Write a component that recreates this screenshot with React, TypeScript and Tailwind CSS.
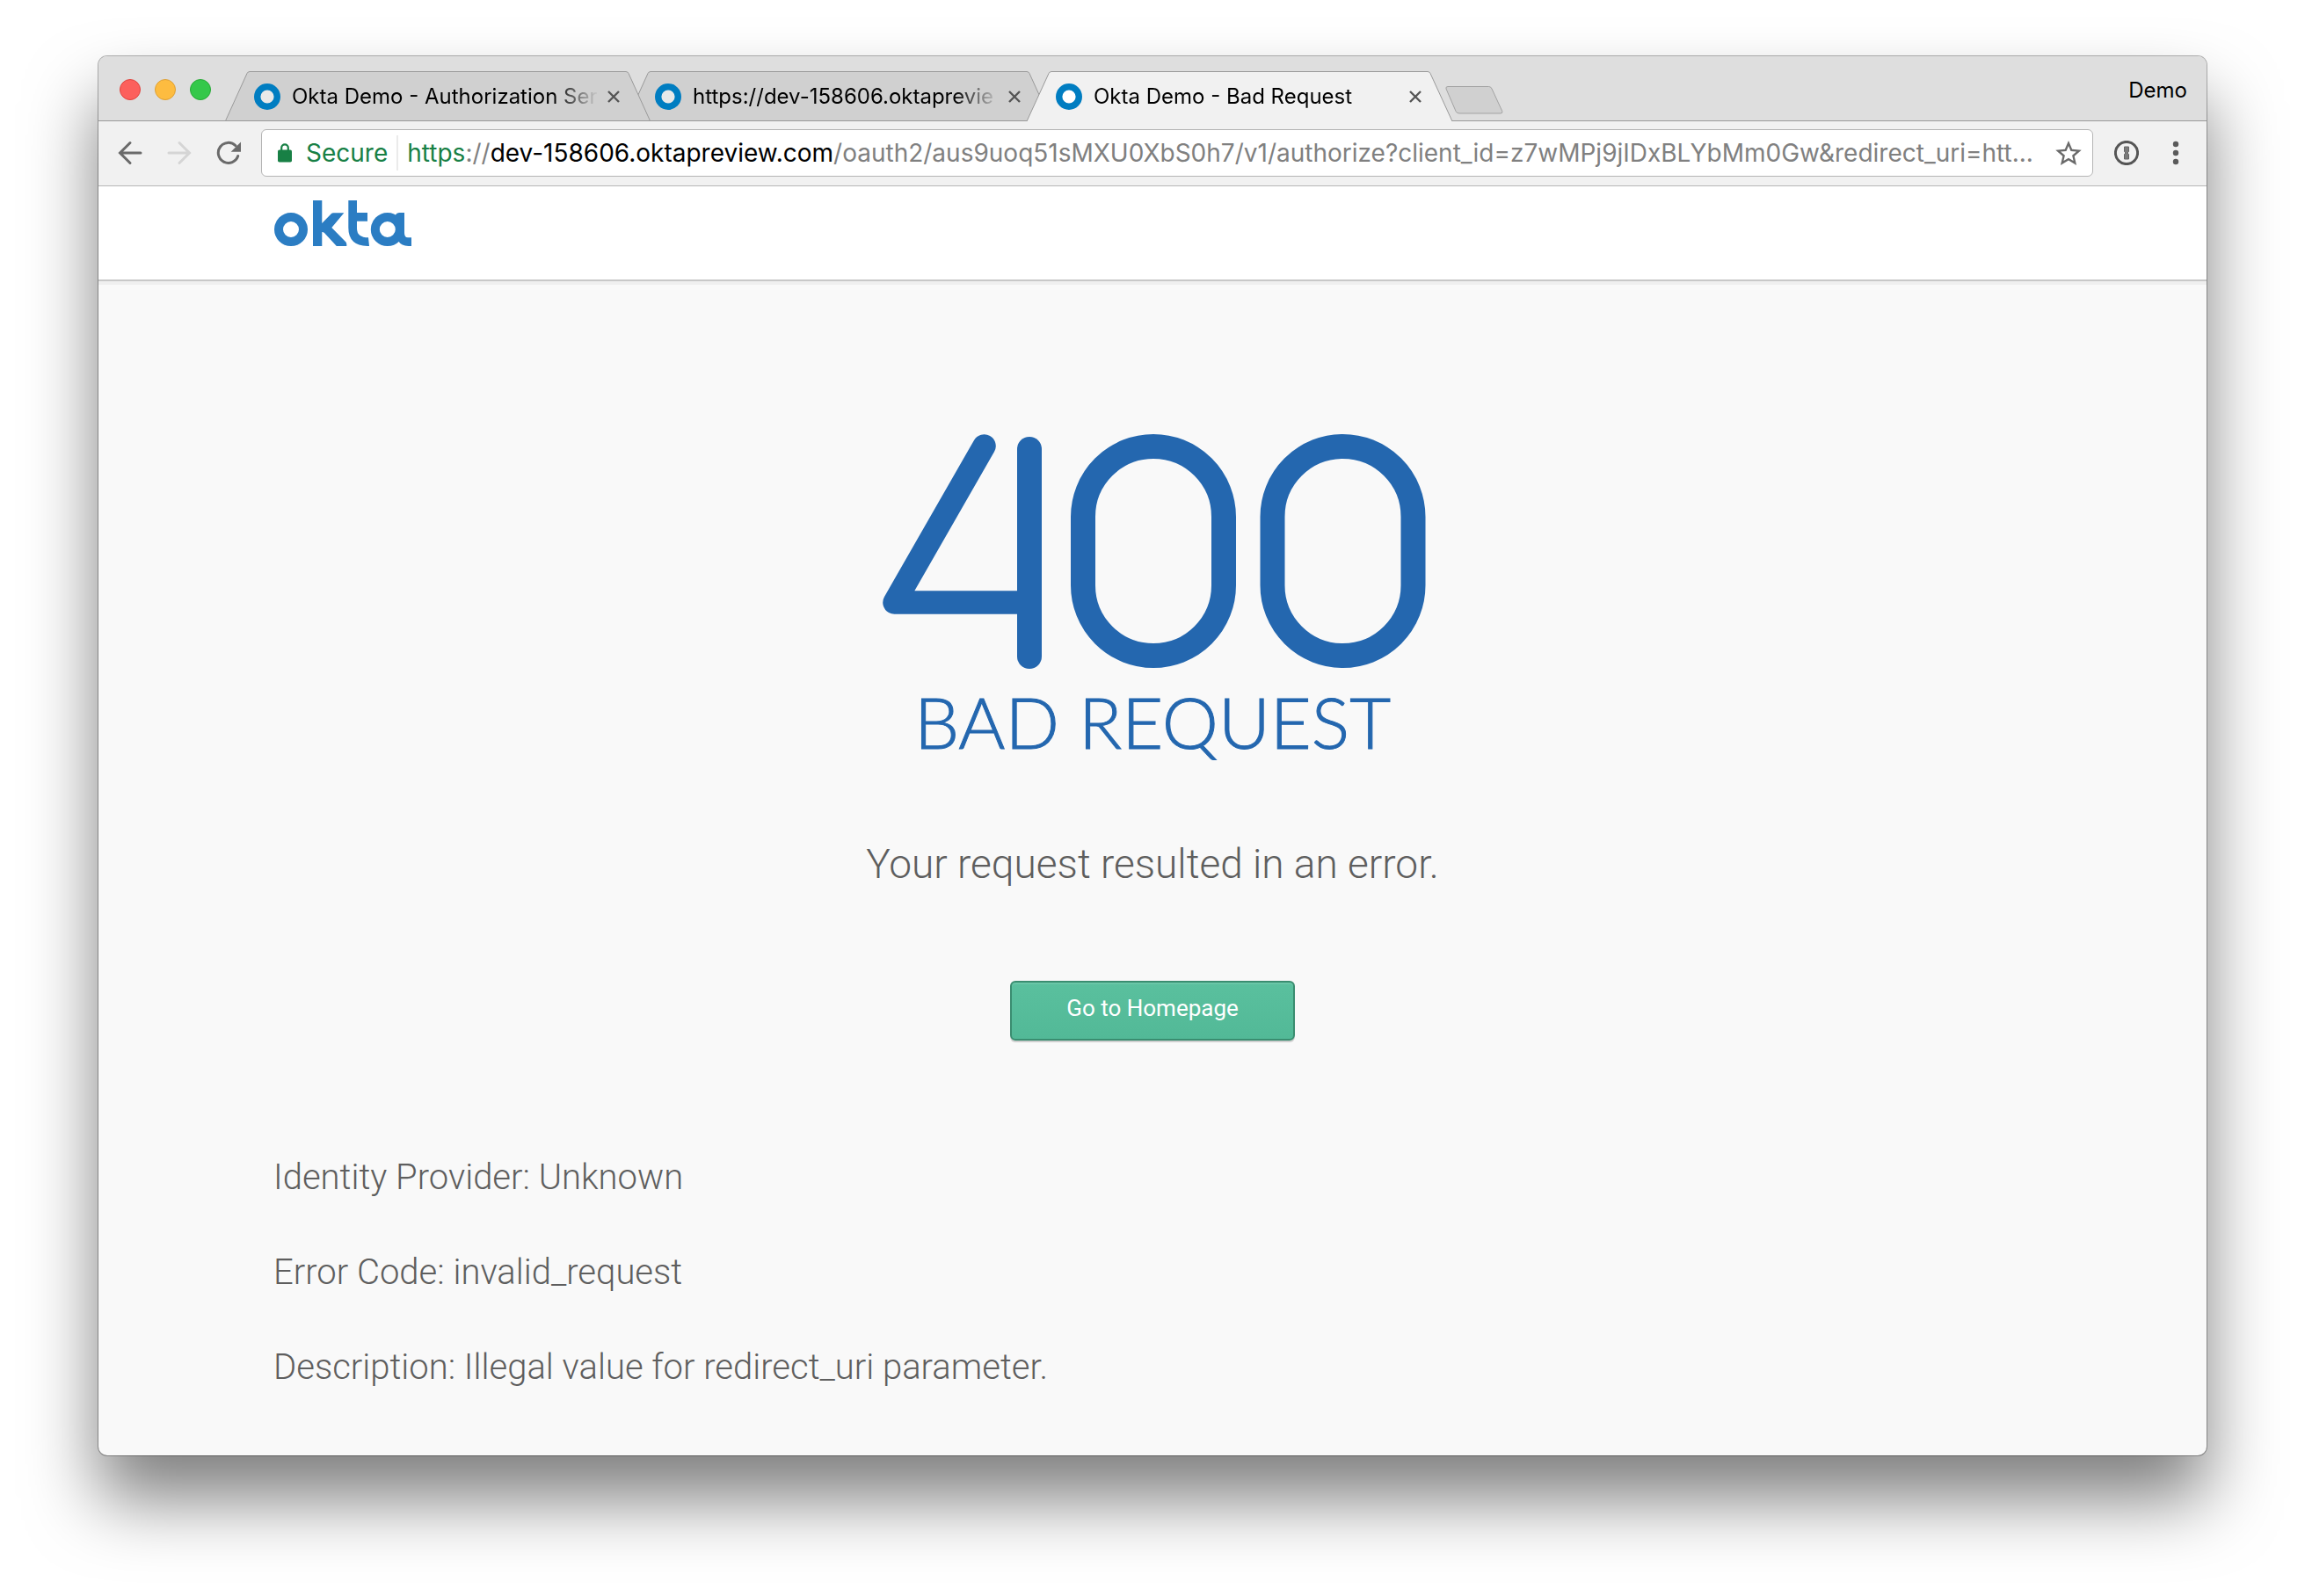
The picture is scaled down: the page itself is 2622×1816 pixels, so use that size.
import type { ReactNode } from "react";

type TabData = { title: string; active?: boolean; layer: string };

const tabs: TabData[] = [
  { title: "Okta Demo - Authorization Ser", layer: "z-20" },
  { title: "https://dev-158606.oktaprevie", layer: "z-10" },
  { title: "Okta Demo - Bad Request", active: true, layer: "z-30" },
];

const details = [
  "Identity Provider: Unknown",
  "Error Code: invalid_request",
  "Description: Illegal value for redirect_uri parameter.",
];

function Tab({ title, active, layer }: TabData) {
  return (
    <div className={`relative flex h-[57px] w-[484px] items-center pr-[35px] pl-[33px] ${layer}`}>
      <svg className="absolute inset-0 h-full w-full" viewBox="0 0 484 57" preserveAspectRatio="none" aria-hidden="true">
        {active ? (
          <path d="M0 57L25 2.5Q26 .5 28 .5H456Q458 .5 459 2.5L484 57" fill="#f1f1f1" stroke="#999" />
        ) : (
          <path d="M.5 56.5L25 2.5Q26 .5 28 .5H456Q458 .5 459 2.5L483.5 56.5Z" fill="#d0d0d0" stroke="#999" />
        )}
      </svg>
      <svg className="relative size-[30px] shrink-0" viewBox="0 0 30 30" aria-hidden="true">
        <circle cx="15" cy="15" r="11.3" fill={active ? "#fff" : "#e9e9e9"} stroke="#007dc1" strokeWidth="7.4" />
      </svg>
      <button
        type="button"
        role="tab"
        aria-selected={!!active}
        className="relative ml-[13px] min-w-0 flex-1 text-left text-2xl whitespace-nowrap text-black [mask-image:linear-gradient(to_right,black_calc(100%-58px),transparent_calc(100%-6px))]"
      >
        {title}
      </button>
      <button type="button" aria-label="Close tab" className="relative ml-1 shrink-0">
        <svg className="size-[14px]" viewBox="0 0 14 14" aria-hidden="true">
          <path d="M1 1L13 13M13 1L1 13" stroke="#555" strokeWidth="2.4" />
        </svg>
      </button>
    </div>
  );
}

function ToolButton({ label, children }: { label: string; children: ReactNode }) {
  return (
    <button type="button" aria-label={label} className="shrink-0">
      <svg className="size-7" viewBox="0 0 28 28" fill="none" aria-hidden="true">
        {children}
      </svg>
    </button>
  );
}

function OktaLogo() {
  return (
    <svg className="h-[52px] w-[156px]" viewBox="0 0 156 52" fill="#2b7dc3" role="img" aria-label="okta">
      <circle cx="19" cy="33" r="14" fill="none" stroke="#2b7dc3" strokeWidth="10" />
      <path d="M44 0H54.3V26L64.5 15.6Q65.6 14.3 67.5 14.3H79.3L65.3 31L81.5 47.5Q82.6 49 82.3 52H70.8L57 37Q56 36 54.3 36V52H44Z" />
      <path d="M84.3 0H94V14H106V23.7H94V32Q94 42.3 107 42.3L108 52Q84.3 52.5 84.3 31Z" />
      <circle cx="128.8" cy="33" r="14" fill="none" stroke="#2b7dc3" strokeWidth="10" />
      <path d="M138 16.5Q139 14 142 14H148V37Q148 42.3 152 42.3H156V52Q145 52.5 141.7 47L138.2 33Z" />
    </svg>
  );
}

export default function App() {
  return (
    <div className="flex min-h-screen flex-col bg-white px-28 pt-16 pb-40 font-['Inter',sans-serif]">
      <div className="flex flex-1 flex-col overflow-hidden rounded-[10px] bg-[#f9f9f9] shadow-[0_0_0_1px_rgba(0,0,0,0.3),0_50px_80px_rgba(0,0,0,0.5)]">
        <div className="flex h-[74px] items-end bg-[#dedede] pr-[22px] pl-6 shadow-[inset_0_-1px_0_#999]">
          <div className="mr-4 flex h-full items-center gap-4 pt-0.5">
            <button type="button" aria-label="Close window" className="size-6 rounded-full border border-[#e0443e] bg-[#fc605c]" />
            <button type="button" aria-label="Minimize window" className="size-6 rounded-full border border-[#dea034] bg-[#fdbc40]" />
            <button type="button" aria-label="Zoom window" className="size-6 rounded-full border border-[#27aa35] bg-[#34c84a]" />
          </div>
          <div role="tablist" className="flex -space-x-7">
            {tabs.map((tab) => (
              <Tab key={tab.title} {...tab} />
            ))}
          </div>
          <button type="button" aria-label="New tab" className="mb-2 -ml-2">
            <svg className="h-8 w-[66px]" viewBox="0 0 66 32" aria-hidden="true">
              <path d="M3 .5H49.5Q52 .5 53 3L64.8 28.5Q65.5 31 63 31H16Q13 31 12 28.5L1 3Q.3 .5 3 .5Z" fill="#d0d0d0" stroke="#a2a2a2" />
            </svg>
          </button>
          <div className="ml-auto flex h-full items-center pt-1 text-2xl text-black">
            <button type="button">Demo</button>
          </div>
        </div>

        <div className="flex h-[74px] items-center border-b border-[#b6b6b6] bg-[#f1f1f1] pr-[21px] pb-px pl-[22px]">
          <div className="mr-[23px] flex gap-7">
            <ToolButton label="Back">
              <path d="M26 14H3M14 2.5L2.5 14L14 25.5" stroke="#6a6a6a" strokeWidth="3" strokeLinecap="round" />
            </ToolButton>
            <ToolButton label="Forward">
              <path d="M2 14H25M14 2.5L25.5 14L14 25.5" stroke="#d5d5d5" strokeWidth="3" strokeLinecap="round" />
            </ToolButton>
            <ToolButton label="Reload">
              <path d="M24.7 17.5A11.5 11.5 0 1 1 22 5.8" stroke="#6a6a6a" strokeWidth="3" strokeLinecap="round" />
              <path d="M28 1.5V12.8H16.7Z" fill="#6a6a6a" />
            </ToolButton>
          </div>
          <div className="flex h-[54px] min-w-0 flex-1 items-center rounded-md border border-[#b4b4b4] bg-white pr-3 pl-[18px] text-[28px]">
            <svg className="h-[22px] w-4 shrink-0" viewBox="0 0 16 22" aria-hidden="true">
              <rect y="7.5" width="16" height="14" rx="1.8" fill="#188045" />
              <path d="M4.2 8V5.2A3.8 3.8 0 0 1 11.8 5.2V8" fill="none" stroke="#188045" strokeWidth="2.2" />
            </svg>
            <span className="ml-4 text-[#188045]">Secure</span>
            <span className="mx-2.5 h-10 w-0.5 shrink-0 bg-[#ebebeb]" />
            <div role="textbox" aria-label="Address" tabIndex={0} className="min-w-0 flex-1 overflow-hidden whitespace-nowrap text-[#808080]">
              <span className="text-[#188045]">https</span>://<span className="text-black">dev-158606.oktapreview.com</span>
              /oauth2/aus9uoq51sMXU0XbS0h7/v1/authorize?client_id=z7wMPj9jIDxBLYbMm0Gw&amp;redirect_uri=htt...
            </div>
            <button type="button" aria-label="Bookmark this page" className="shrink-0">
              <svg className="h-7 w-[30px]" viewBox="2 2 20 19" fill="#6a6a6a" aria-hidden="true">
                <path d="M22 9.24l-7.19-.62L12 2 9.19 8.63 2 9.24l5.46 4.73L5.82 21 12 17.27 18.18 21l-1.63-7.03L22 9.24zM12 15.4l-3.76 2.27 1-4.28-3.32-2.88 4.38-.38L12 6.1l1.71 4.04 4.38.38-3.32 2.88 1 4.28L12 15.4z" />
              </svg>
            </button>
          </div>
          <div className="ml-6 flex gap-7">
            <ToolButton label="1Password">
              <circle cx="14" cy="14" r="12.6" stroke="#555" strokeWidth="3" />
              <path d="M11.5 7H16.5V12.5L15 14L16.5 15.5V21H11.5V15.5L13 14L11.5 12.5Z" fill="#7a7a7a" stroke="#666" />
            </ToolButton>
            <ToolButton label="Menu">
              <g fill="#5a5a5a">
                <circle cx="14" cy="4" r="3.2" />
                <circle cx="14" cy="14" r="3.2" />
                <circle cx="14" cy="24" r="3.2" />
              </g>
            </ToolButton>
          </div>
        </div>

        <header className="h-[108px] shrink-0 border-b-2 border-[#c8c8c8] bg-white px-[200px] pt-4">
          <a href="#home" className="inline-block">
            <OktaLogo />
          </a>
        </header>

        <main className="flex-1 border-t-4 border-[#efefef] px-[199px] pt-[170px] font-['Roboto',sans-serif] text-[#5e5e5e]">
          <div className="flex flex-col items-center">
            <svg className="h-[267px] w-[622px]" viewBox="0 0 622 267" fill="none" stroke="#2467af" strokeLinecap="round" strokeLinejoin="round" role="img" aria-label="400">
              <path d="M119.5 13.5L17.5 191.5H171" strokeWidth="26.5" />
              <path d="M171 17V253" strokeWidth="28" />
              <rect x="232" y="14" width="160" height="238" rx="80" strokeWidth="28" />
              <rect x="447.5" y="14" width="160" height="238" rx="80" strokeWidth="28" />
            </svg>
            <h1 className="mt-3 font-['Lato',sans-serif] text-[81px] leading-[96px] font-light text-[#2467af] [-webkit-text-stroke:1px_#2467af]">
              BAD REQUEST
            </h1>
            <p className="mt-[86px] text-[46px] leading-[56px] font-light">Your request resulted in an error.</p>
            <button
              type="button"
              className="mt-[105px] h-[68px] w-[324px] rounded-md border-2 border-[#3a8d70] bg-linear-to-b from-[#5ac09e] to-[#52b997] pb-1.5 text-[26px] text-white shadow-[0_2px_0_#cfcfcf,inset_0_2px_0_#69c6a7]"
            >
              Go to Homepage
            </button>
          </div>
          <div className="mt-[132px] flex flex-col gap-[60px] text-[40px] leading-[48px] font-light">
            {details.map((line) => (
              <p key={line}>{line}</p>
            ))}
          </div>
        </main>
      </div>
    </div>
  );
}
